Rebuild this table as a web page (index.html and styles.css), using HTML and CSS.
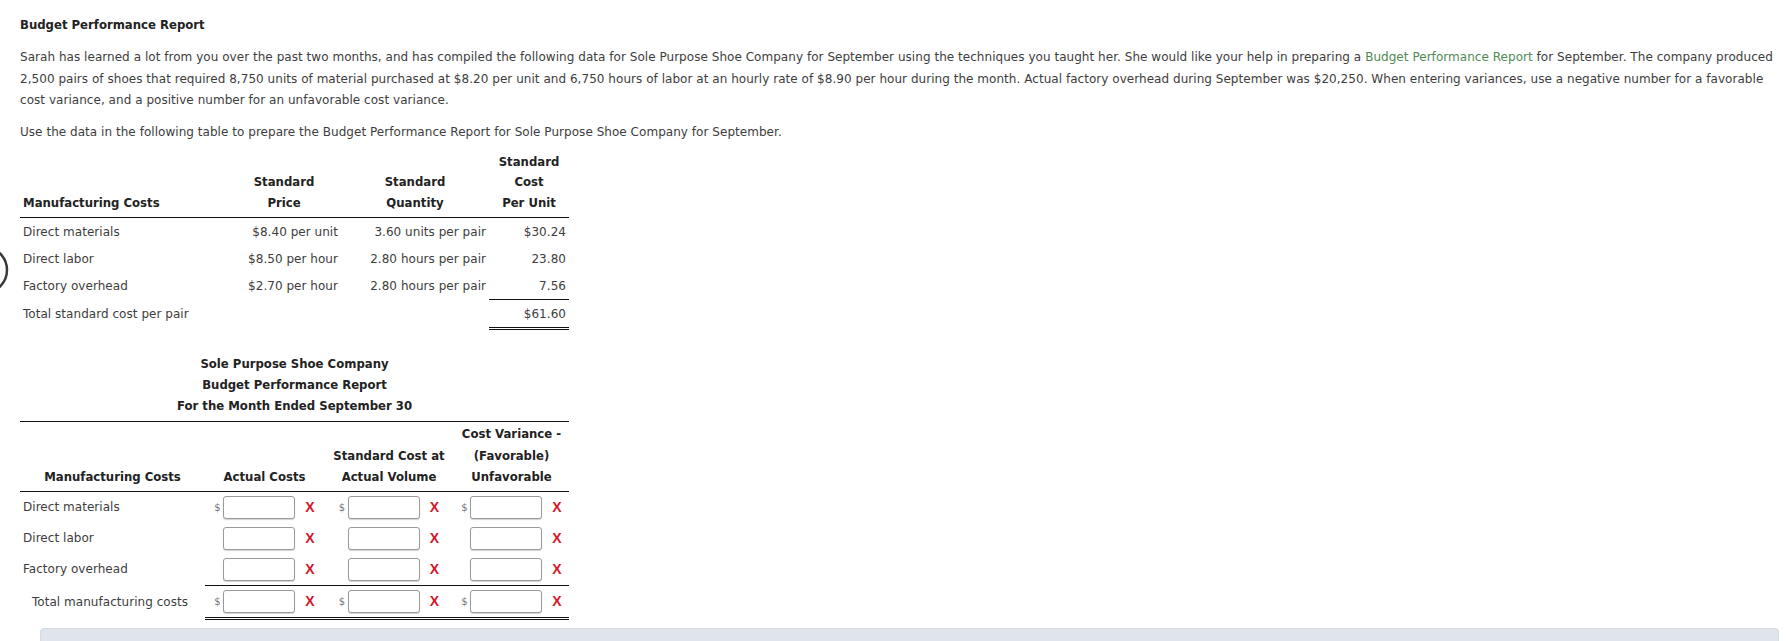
FILE: index.html
```html
<!DOCTYPE html>
<html lang="en">
<head>
<meta charset="utf-8">
<title>Budget Performance Report</title>
<link rel="stylesheet" href="styles.css">
</head>
<body>
<svg class="side-circle" width="12" height="60" viewBox="0 0 12 60" aria-hidden="true"><circle cx="-16" cy="30" r="23" fill="none" stroke="#3a3a3a" stroke-width="2.5"/></svg>
<div class="page">
  <h1 class="title">Budget Performance Report</h1>
  <p class="intro">Sarah has learned a lot from you over the past two months, and has compiled the following data for Sole Purpose Shoe Company for September using the techniques you taught her. She would like your help in preparing a <span class="term">Budget Performance Report</span> for September. The company produced 2,500 pairs of shoes that required 8,750 units of material purchased at $8.20 per unit and 6,750 hours of labor at an hourly rate of $8.90 per hour during the month. Actual factory overhead during September was $20,250. When entering variances, use a negative number for a favorable cost variance, and a positive number for an unfavorable cost variance.</p>
  <p class="instr">Use the data in the following table to prepare the Budget Performance Report for Sole Purpose Shoe Company for September.</p>

  <table class="std">
    <colgroup><col class="c1"><col class="c2"><col class="c3"><col class="c4"></colgroup>
    <thead>
      <tr><th class="lbl">Manufacturing Costs</th><th>Standard<br>Price</th><th>Standard<br>Quantity</th><th>Standard<br>Cost<br>Per Unit</th></tr>
    </thead>
    <tbody>
      <tr><td class="lbl">Direct materials</td><td class="num">$8.40 per unit</td><td class="num">3.60 units per pair</td><td class="num">$30.24</td></tr>
      <tr><td class="lbl">Direct labor</td><td class="num">$8.50 per hour</td><td class="num">2.80 hours per pair</td><td class="num">23.80</td></tr>
      <tr><td class="lbl">Factory overhead</td><td class="num">$2.70 per hour</td><td class="num">2.80 hours per pair</td><td class="num sub">7.56</td></tr>
      <tr><td class="lbl">Total standard cost per pair</td><td></td><td></td><td class="num tot">$61.60</td></tr>
    </tbody>
  </table>

  <div class="report">
    <div class="report-title">Sole Purpose Shoe Company<br>Budget Performance Report<br>For the Month Ended September 30</div>
    <table class="bpr">
      <colgroup><col class="d1"><col class="d2"><col class="d3"><col class="d4"></colgroup>
      <thead>
        <tr><th>Manufacturing Costs</th><th>Actual Costs</th><th>Standard Cost at<br>Actual Volume</th><th>Cost Variance -<br>(Favorable)<br>Unfavorable</th></tr>
      </thead>
      <tbody>
        <tr>
          <td class="lbl">Direct materials</td>
          <td><div class="cell"><span class="cur">$</span><input class="amt" type="text"><span class="wrong">X</span></div></td>
          <td><div class="cell"><span class="cur">$</span><input class="amt" type="text"><span class="wrong">X</span></div></td>
          <td><div class="cell"><span class="cur">$</span><input class="amt" type="text"><span class="wrong">X</span></div></td>
        </tr>
        <tr>
          <td class="lbl">Direct labor</td>
          <td><div class="cell"><span class="cur"></span><input class="amt" type="text"><span class="wrong">X</span></div></td>
          <td><div class="cell"><span class="cur"></span><input class="amt" type="text"><span class="wrong">X</span></div></td>
          <td><div class="cell"><span class="cur"></span><input class="amt" type="text"><span class="wrong">X</span></div></td>
        </tr>
        <tr class="pre-total">
          <td class="lbl">Factory overhead</td>
          <td><div class="cell"><span class="cur"></span><input class="amt" type="text"><span class="wrong">X</span></div></td>
          <td><div class="cell"><span class="cur"></span><input class="amt" type="text"><span class="wrong">X</span></div></td>
          <td><div class="cell"><span class="cur"></span><input class="amt" type="text"><span class="wrong">X</span></div></td>
        </tr>
        <tr class="total">
          <td class="lbl indent">Total manufacturing costs</td>
          <td><div class="cell"><span class="cur">$</span><input class="amt" type="text"><span class="wrong">X</span></div></td>
          <td><div class="cell"><span class="cur">$</span><input class="amt" type="text"><span class="wrong">X</span></div></td>
          <td><div class="cell"><span class="cur">$</span><input class="amt" type="text"><span class="wrong">X</span></div></td>
        </tr>
      </tbody>
    </table>
  </div>

  <div class="feedback"><span class="fb-title">Check My Work</span></div>
</div>
</body>
</html>
```

FILE: styles.css
```css
html, body {
  margin: 0;
  padding: 0;
  background: #ffffff;
}

body {
  font-family: "DejaVu Sans", Verdana, sans-serif;
  font-size: 12px;
  letter-spacing: 0.04px;
  color: #3d3d3d;
  position: relative;
  overflow: hidden;
  height: 641px;
}

.side-circle {
  position: absolute;
  left: 0;
  top: 240px;
}

.page {
  padding: 15px 10px 0 20px;
}

.title {
  margin: 0 0 11px;
  font-size: 11.7px;
  letter-spacing: 0;
  line-height: 21px;
  font-weight: bold;
  color: #222;
}

.intro, .instr {
  margin: 0 0 10.5px;
  line-height: 21.5px;
}
.instr {
  margin-bottom: 8px;
}

.term {
  color: #4f8a55;
}

/* Standard cost table */
.std {
  border-collapse: collapse;
  width: 549px;
  table-layout: fixed;
}
.std .c1 { width: 207px; }
.std .c2 { width: 114px; }
.std .c3 { width: 148px; }
.std .c4 { width: 80px; }

.std th {
  font-weight: bold;
  font-size: 11.7px;
  letter-spacing: 0;
  color: #222;
  line-height: 20.5px;
  text-align: center;
  vertical-align: bottom;
  padding: 0 0 4px;
  border-bottom: 1px solid #111;
}
.std th.lbl {
  text-align: left;
  padding-left: 3px;
}
.std td {
  height: 27px;
  padding: 0;
  vertical-align: middle;
  white-space: nowrap;
}
.std td.lbl {
  padding-left: 3px;
}
.std td.num {
  text-align: right;
  padding-right: 3px;
}
.std td.sub {
  border-bottom: 1px solid #111;
}
.std td.tot {
  border-bottom: 3px double #111;
}

/* Budget performance report */
.report {
  width: 549px;
  margin-top: 24px;
}
.report-title {
  text-align: center;
  font-weight: bold;
  font-size: 11.7px;
  letter-spacing: 0;
  color: #222;
  line-height: 21px;
  padding-bottom: 4px;
  border-bottom: 1px solid #111;
}

.bpr {
  border-collapse: collapse;
  width: 549px;
  table-layout: fixed;
}
.bpr .d1 { width: 185px; }
.bpr .d2 { width: 119px; }
.bpr .d3 { width: 130px; }
.bpr .d4 { width: 115px; }

.bpr th {
  font-weight: bold;
  font-size: 11.7px;
  letter-spacing: 0;
  color: #222;
  line-height: 21.5px;
  text-align: center;
  vertical-align: bottom;
  padding: 2px 0 2px;
  border-bottom: 1px solid #111;
  white-space: nowrap;
}
.bpr td {
  height: 31px;
  padding: 0;
  vertical-align: middle;
}
.bpr td.lbl {
  padding-left: 3px;
  white-space: nowrap;
}
.bpr td.indent {
  padding-left: 12px;
}
.bpr tr.pre-total td + td {
  border-bottom: 1px solid #111;
}
.bpr tr.total td + td {
  border-bottom: 3px double #111;
}

.cell {
  display: flex;
  align-items: center;
  justify-content: center;
}
.cur {
  width: 7px;
  margin-right: 2px;
  font-size: 10px;
  letter-spacing: 0;
  color: #777;
  text-align: left;
}
.amt {
  box-sizing: border-box;
  width: 72px;
  height: 23px;
  margin: 0;
  padding: 0 4px;
  border: 1px solid #9a9a9a;
  border-radius: 3px;
  background: #fff;
  box-shadow: 0 1px 1px rgba(0, 0, 0, 0.18);
  font: inherit;
}
.wrong {
  margin-left: 10px;
  font-family: "Liberation Sans", Arial, sans-serif;
  font-weight: bold;
  font-size: 14px;
  letter-spacing: 0;
  line-height: 14px;
  color: #d3162c;
}

.feedback {
  margin: 8px 0 0 20px;
  height: 60px;
  background: #dfe5ea;
  border: 1px solid #d3dae0;
  border-radius: 4px;
  padding: 12px 8px 0;
  box-sizing: border-box;
}
.fb-title {
  font-weight: bold;
  color: #222;
}
```
